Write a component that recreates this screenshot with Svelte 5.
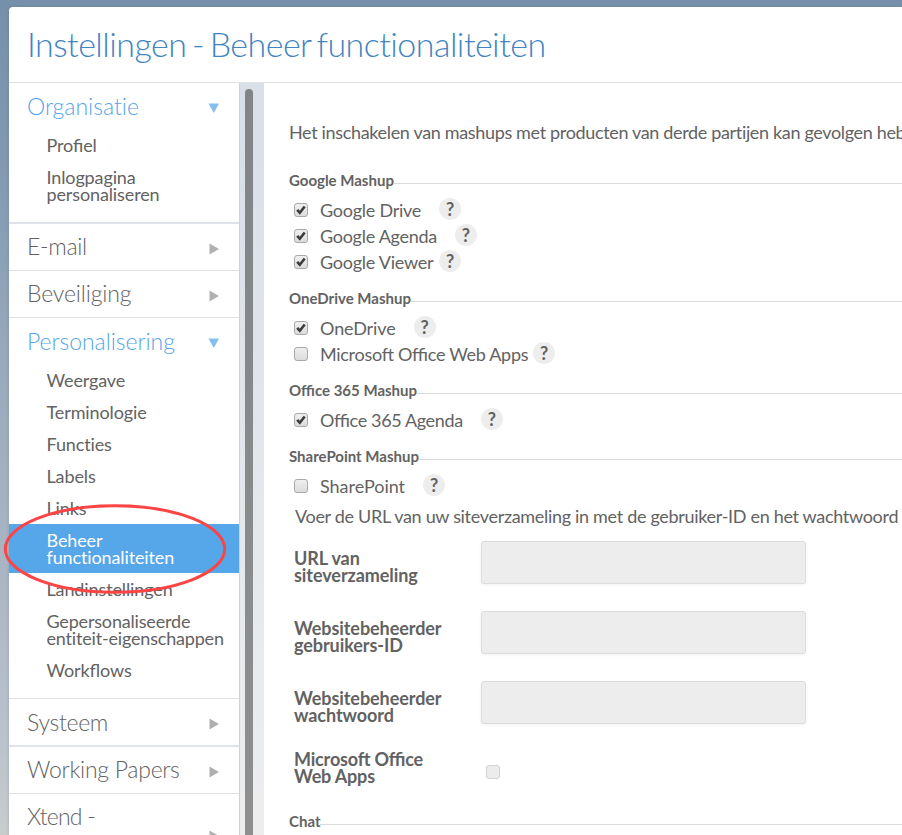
<script>
  const menu = [
    { title: 'Organisatie', ls: -0.01, open: true, thick: true, items: ['Profiel', 'Inlogpagina\npersonaliseren'] },
    { title: 'E-mail', ls: -0.3 },
    { title: 'Beveiliging', ls: -0.15 },
    {
      title: 'Personalisering',
      ls: -0.05,
      open: true,
      items: ['Weergave', 'Terminologie', 'Functies', 'Labels', 'Links', 'Beheer\nfunctionaliteiten', 'Landinstellingen', 'Gepersonaliseerde\nentiteit-eigenschappen', 'Workflows']
    },
    { title: 'Systeem', ls: -0.3, thick: true, low: true },
    { title: 'Working Papers', ls: -0.27 },
    { title: 'Xtend -', ls: -0.8, tall: true }
  ];
  const active = 'Beheer\nfunctionaliteiten';

  const groups = [
    {
      title: 'Google Mashup',
      options: [
        { label: 'Google Drive', on: true, gap: 18, ls: -0.25 },
        { label: 'Google Agenda', on: true, gap: 18, ls: -0.27 },
        { label: 'Google Viewer', on: true, gap: 6, ls: -0.25 }
      ]
    },
    {
      title: 'OneDrive Mashup',
      options: [
        { label: 'OneDrive', on: true, gap: 18, ls: -0.1 },
        { label: 'Microsoft Office Web Apps', on: false, gap: 5, ls: -0.29 }
      ]
    },
    { title: 'Office 365 Mashup', options: [{ label: 'Office 365 Agenda', on: true, gap: 18, ls: -0.36 }] },
    { title: 'SharePoint Mashup', options: [{ label: 'SharePoint', on: false, gap: 18, ls: -0.02 }] }
  ];

  const fields = ['URL van\nsiteverzameling', 'Websitebeheerder\ngebruikers-ID', 'Websitebeheerder\nwachtwoord'];
</script>

{#snippet check(on, disabled)}
  <span class="check" class:disabled role="checkbox" aria-checked={on} tabindex="-1">
    {#if on}
      <svg width="14" height="14" viewBox="0 0 14 14"><path d="M3.2 6.8 L5.8 9.7 L10.7 3.5" fill="none" stroke="#3c3c3c" stroke-width="2.6" /></svg>
    {/if}
  </span>
{/snippet}

<div class="page">
  <div class="panel">
    <header><h1>Instellingen - Beheer functionaliteiten</h1></header>
    <div class="body">
      <nav>
        {#each menu as section}
          <section class:open={section.open} class:thick={section.thick}>
            <div class="head" class:tall={section.tall} class:low={section.low}>
              <h2 style="letter-spacing: {section.ls}px">{section.title}</h2>
              <svg class="arrow" width="12" height="12" viewBox="0 0 12 12">
                {#if section.open}
                  <path d="M0.5 1.5 H11 L5.8 11 Z" fill="#86bfee" />
                {:else}
                  <path d="M1.5 0.5 V11.5 L11 6 Z" fill="#b0b0b0" />
                {/if}
              </svg>
            </div>
            {#if section.items}
              <ul>
                {#each section.items as item}
                  <li class:active={item === active} class:liga={/fi|fl/.test(item)} class:long={item.length > 30}>{item}</li>
                {/each}
              </ul>
            {/if}
          </section>
        {/each}
      </nav>
      <div class="track"><div class="thumb"></div></div>
      <main>
        <p class="intro">Het inschakelen van mashups met producten van derde partijen kan gevolgen hebben</p>
        {#each groups as group}
          <div class="group">
            <div class="legend"><b>{group.title}</b><i></i></div>
            {#each group.options as option}
              <div class="option">
                {@render check(option.on, false)}
                <span class="label liga" style="letter-spacing: {option.ls}px">{option.label}</span>
                <span class="help" style="margin-left: {option.gap}px">?</span>
              </div>
            {/each}
          </div>
        {/each}
        <p class="note">Voer de URL van uw siteverzameling in met de gebruiker-ID en het wachtwoord</p>
        {#each fields as field}
          <div class="field"><label for={field}>{field}</label><input id={field} disabled /></div>
        {/each}
        <div class="field last"><span class="caption liga">{'Microsoft Office\nWeb Apps'}</span>{@render check(false, true)}</div>
        <div class="legend chat"><b>Chat</b><i></i></div>
      </main>
    </div>
  </div>
  <svg class="mark" width="224" height="92" viewBox="0 0 224 92">
    <ellipse cx="112" cy="46" rx="109.7" ry="43.2" fill="none" stroke="#fb4545" stroke-width="3" />
  </svg>
</div>

<style>
  :global(body) { margin: 0; overflow: hidden; }
  h1, h2, p, ul { margin: 0; padding: 0; font-weight: 400; }
  .page {
    position: relative;
    box-sizing: border-box;
    width: 902px;
    height: 835px;
    padding: 7px 0 0 9px;
    overflow: hidden;
    background: linear-gradient(#7690ab 0, #8198b0 150px, #9aabbd 380px, #abb6c4 580px, #bcc2ce 740px, #c8cccb 835px);
    font-family: Lato, sans-serif;
    color: #626262;
  }
  .liga { font-feature-settings: 'liga' 1; }
  .panel {
    height: 828px;
    background: #fff;
    border-radius: 4px 0 0 0;
    box-shadow: 0 0 3px rgba(60, 80, 100, 0.25);
    overflow: hidden;
  }
  header { box-sizing: border-box; height: 76px; border-bottom: 1px solid #e0e1e3; padding-left: 18px; }
  h1 { font-size: 34px; font-weight: 300; line-height: 74px; letter-spacing: -0.54px; word-spacing: -3.1px; color: #4284bf; white-space: nowrap; }
  .body { display: flex; height: 752px; }
  nav { width: 230px; flex: none; }
  section { border-bottom: 1px solid #dfe3e9; }
  section.thick { border-bottom-width: 2px; }
  .head { display: flex; justify-content: space-between; align-items: center; height: 46px; padding: 0 19px 0 18px; }
  .head.tall { height: 80px; }
  .tall h2 { align-self: flex-start; }
  h2 { font-size: 23px; font-weight: 300; line-height: 45px; margin-bottom: 1px; }
  .low h2 { line-height: 46px; margin: 0; }
  .open h2 { color: #56a5ea; line-height: 46px; margin: 0; }
  .arrow { flex: none; margin-top: 4px; }
  ul { list-style: none; padding-bottom: 12px; }
  li { padding: 8px 0 7px 37.5px; font-size: 18px; line-height: 17px; letter-spacing: -0.12px; white-space: pre; }
  li.long { letter-spacing: -0.18px; }
  li.active { background: #56a6ea; color: #fff; }
  .track {
    box-sizing: border-box;
    width: 25px;
    flex: none;
    padding: 6px 0 0 5px;
    border-left: 1px solid #ccd3db;
    background: linear-gradient(#d8dfe8, #e0e4e9 35%, #e7eaed 70%, #ededee);
  }
  .thumb { width: 8px; height: 760px; border-radius: 4px; background: linear-gradient(#808488, #8f8f8f); }
  main { flex: 1; min-width: 0; padding: 32px 0 0 25px; overflow: hidden; }
  .intro { height: 48px; font-size: 18px; line-height: 34px; letter-spacing: -0.34px; white-space: nowrap; }
  .group { margin-bottom: 6px; }
  .legend { display: flex; align-items: center; height: 34px; font-size: 15px; }
  .legend b { font-weight: 700; white-space: nowrap; }
  .legend i { flex: 1; height: 1px; background: #d9dadb; margin-top: 7px; }
  .option { display: flex; align-items: center; height: 26px; padding-left: 5px; font-size: 18px; white-space: nowrap; }
  .label { margin-left: 12px; }
  .check {
    box-sizing: border-box;
    display: block;
    width: 14px;
    height: 14px;
    flex: none;
    border: 1px solid #a9a9a9;
    border-radius: 3px;
    background: linear-gradient(#efefef, #dcdcdc);
  }
  .check svg { display: block; margin: -1px; }
  .check.disabled { border-color: #d2d2d2; background: #ececec; }
  .help {
    width: 22px;
    height: 22px;
    margin-top: -3px;
    border-radius: 50%;
    background: #ededed;
    font-size: 18px;
    font-weight: 700;
    line-height: 22px;
    text-align: center;
  }
  .note { height: 42px; margin-top: -6px; padding-left: 6px; font-size: 18px; line-height: 34px; letter-spacing: -0.31px; white-space: nowrap; }
  .field { display: flex; height: 70px; padding-left: 5px; }
  label, .caption { width: 187px; padding-top: 9px; font-size: 18px; font-weight: 700; line-height: 17px; letter-spacing: -0.07px; white-space: pre; }
  .field input {
    box-sizing: border-box;
    width: 325px;
    height: 43px;
    border: 1px solid #dcdcdc;
    border-radius: 3px;
    background: #ededed;
    box-shadow: 0 1px 3px rgba(0, 0, 0, 0.06);
  }
  .last { height: 53px; }
  .last .caption { padding-top: 0; width: 192px; letter-spacing: -0.17px; }
  .last .check { margin-top: 14px; }
  .mark { position: absolute; left: 3px; top: 503px; }
</style>
